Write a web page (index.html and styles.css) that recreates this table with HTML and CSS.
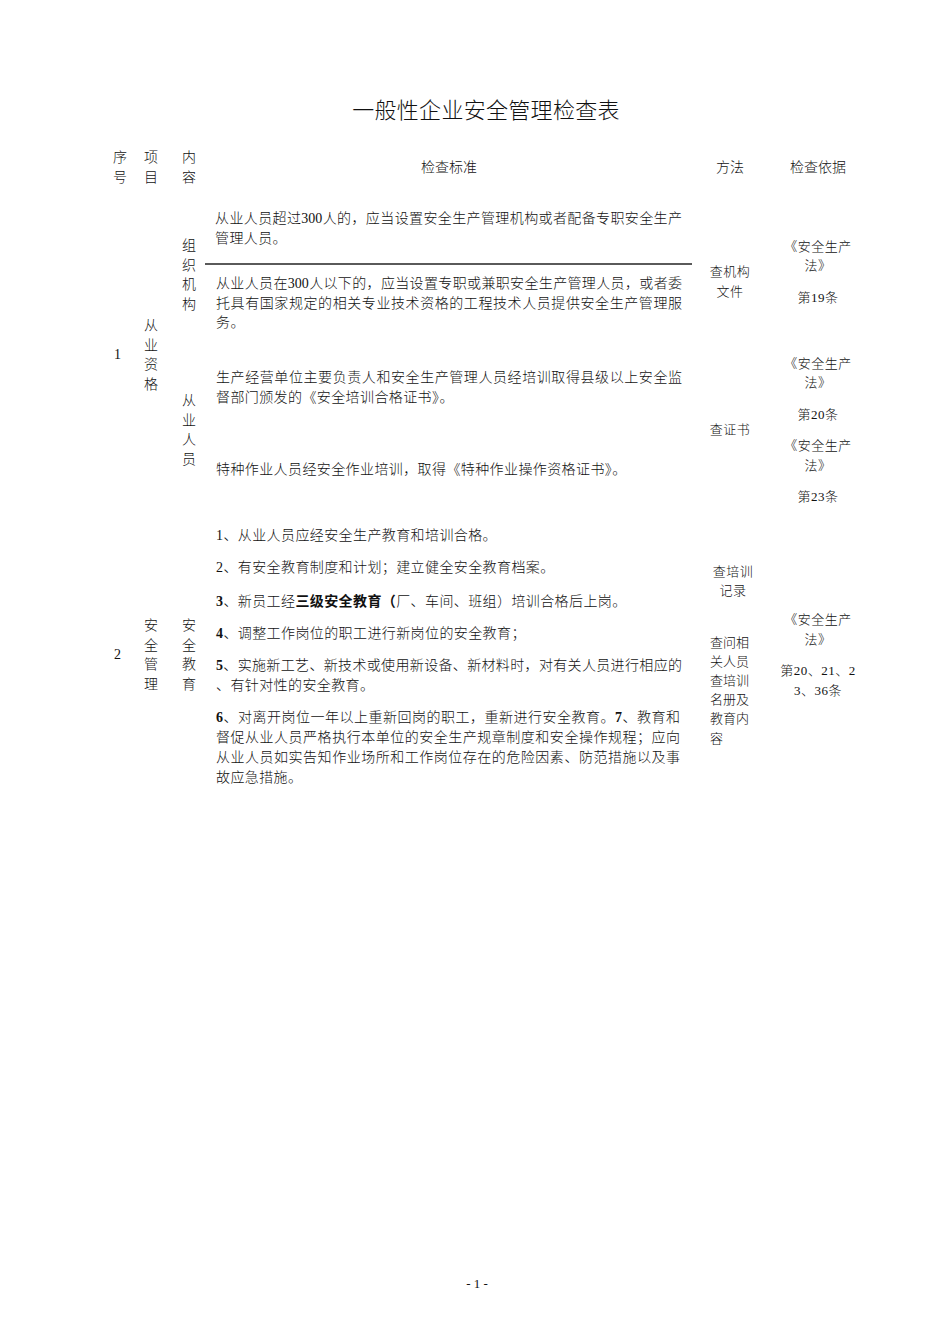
FILE: index.html
```html
<!DOCTYPE html>
<html lang="zh-CN">
<head>
<meta charset="utf-8">
<title>一般性企业安全管理检查表</title>
<link rel="stylesheet" href="styles.css">
</head>
<body>
<div class="page">
  <h1 class="title">一般性企业安全管理检查表</h1>

  <div class="sheet">
    <!-- header -->
    <div class="hd col-no narrow">序号</div>
    <div class="hd col-item narrow">项目</div>
    <div class="hd col-sub narrow">内容</div>
    <div class="hd col-std">检查标准</div>
    <div class="hd col-method">方法</div>
    <div class="hd col-basis">检查依据</div>

    <!-- section 1 -->
    <div class="col-no rows-1 num-cell">1</div>
    <div class="col-item rows-1 narrow">从业资格</div>
    <div class="col-sub rows-1a narrow">组织机构</div>
    <div class="col-sub rows-1b narrow">从业人员</div>

    <div class="col-std row-a std ruled">
      <span class="ln">从业人员超过300人的，应当设置安全生产管理机构或者配备专职安全生产</span>
      <span>管理人员。</span>
    </div>
    <div class="col-std row-b std pt-b">
      <span class="ln">从业人员在300人以下的，应当设置专职或兼职安全生产管理人员，或者委</span>
      <span class="ln">托具有国家规定的相关专业技术资格的工程技术人员提供安全生产管理服</span>
      <span>务。</span>
    </div>
    <div class="col-std row-c std pt-c">
      <span class="ln">生产经营单位主要负责人和安全生产管理人员经培训取得县级以上安全监</span>
      <span>督部门颁发的《安全培训合格证书》。</span>
    </div>
    <div class="col-std row-d std pt-d">
      <span>特种作业人员经安全作业培训，取得《特种作业操作资格证书》。</span>
    </div>

    <div class="col-method rows-1a small method-1a">查机构<br>文件</div>
    <div class="col-method rows-1b small">查证书</div>

    <div class="col-basis rows-1a small basis basis-1a">
      <p>《安全生产<br>法》</p>
      <p>第19条</p>
    </div>
    <div class="col-basis rows-1b small basis">
      <p>《安全生产<br>法》</p>
      <p>第20条</p>
      <p>《安全生产<br>法》</p>
      <p>第23条</p>
    </div>

    <!-- section 2 -->
    <div class="col-no row-2 num-cell">2</div>
    <div class="col-item row-2 narrow">安全管理</div>
    <div class="col-sub row-2 narrow">安全教育</div>

    <div class="col-std row-2 std std-2">
      <p>1、从业人员应经安全生产教育和培训合格。</p>
      <p>2、有安全教育制度和计划；建立健全安全教育档案。</p>
      <p><b>3</b>、新员工经<b class="hei">三级安全教育（</b>厂、车间、班组）培训合格后上岗。</p>
      <p><b>4</b>、调整工作岗位的职工进行新岗位的安全教育；</p>
      <p><span class="ln"><b>5</b>、实施新工艺、新技术或使用新设备、新材料时，对有关人员进行相应的</span><span>、有针对性的安全教育。</span></p>
      <p class="narrower"><span class="ln"><b>6</b>、对离开岗位一年以上重新回岗的职工，重新进行安全教育。<b>7</b>、教育和</span><span class="ln">督促从业人员严格执行本单位的安全生产规章制度和安全操作规程；应向</span><span class="ln">从业人员如实告知作业场所和工作岗位存在的危险因素、防范措施以及事</span><span>故应急措施。</span></p>
    </div>

    <div class="col-method row-2 small method-2">
      <p class="m-rec">查培训记录</p>
      <p class="m-ask">查问相关人员查培训名册及教育内容</p>
    </div>

    <div class="col-basis row-2 small basis">
      <p>《安全生产<br>法》</p>
      <p>第20、21、2<br>3、36条</p>
    </div>
  </div>

  <footer class="pageno">- 1 -</footer>
</div>
</body>
</html>
```

FILE: styles.css
```css
* {
  box-sizing: border-box;
  margin: 0;
  padding: 0;
}

body {
  margin: 0;
  background: #ffffff;
  color: #111111;
  font-family: "Liberation Serif", "Noto Sans CJK SC", serif;
  font-size: 14px;
  font-weight: 300;
}

.page {
  width: 950px;
  min-height: 1344px;
  display: flex;
  flex-direction: column;
  padding-top: 96px;
}

.title {
  font-weight: 300;
  font-size: 22px;
  line-height: 30px;
  text-align: center;
  width: 760px;
  margin-left: 106px;
  letter-spacing: 0.3px;
}

.sheet {
  margin: 19px 0 0 108px;
  width: 760px;
  display: grid;
  grid-template-columns: 26px 34px 38px 486px 76px 100px;
  grid-template-rows: 45px 10px 65px 85px 70px 90px 290px;
}

/* columns */
.col-no { grid-column: 1; }
.col-item { grid-column: 2; }
.col-sub { grid-column: 3; }
.col-std { grid-column: 4; }
.col-method { grid-column: 5; }
.col-basis { grid-column: 6; }

/* rows */
.hd { grid-row: 1; align-self: center; text-align: center; line-height: 19px; }
.rows-1 { grid-row: 3 / 7; align-self: center; }
.rows-1a { grid-row: 3 / 5; align-self: center; }
.rows-1b { grid-row: 5 / 7; align-self: center; }
.row-a { grid-row: 3; }
.row-b { grid-row: 4; }
.row-c { grid-row: 5; }
.row-d { grid-row: 6; }
.row-2 { grid-row: 7; align-self: center; }

/* one-character-wide stacked labels */
.narrow {
  width: 14px;
  justify-self: center;
  word-break: break-all;
  line-height: 19.5px;
}

.col-no.narrow,
.num-cell {
  justify-self: start;
  margin-left: 5px;
}

.col-sub.narrow {
  margin-left: 0;
  position: relative;
  left: 2px;
}

.hd.col-std,
.hd.col-method,
.hd.col-basis {
  justify-self: center;
}

.num-cell {
  line-height: 20px;
  margin-left: 6px;
}

/* standards column */
.std {
  padding: 0 10px;
  line-height: 19.5px;
  letter-spacing: 0.4px;
}

.std span {
  display: block;
}

.ln {
  text-align: justify;
  text-align-last: justify;
  letter-spacing: 0;
}

.row-a.std {
  padding-top: 9px;
  line-height: 20px;
}

.ruled {
  border-bottom: 2px solid #5a5a5a;
  margin-left: -1px;
}

.pt-b { padding-top: 9px; }
.pt-c { padding-top: 18px; }
.pt-d { padding-top: 40px; }

.std-2 {
  align-self: start;
  padding-top: 16px;
  line-height: 20px;
}

.std-2 p + p {
  margin-top: 12px;
}

.std-2 .narrower {
  padding-right: 2px;
}

.std b {
  font-weight: 700;
}

.hei {
  font-family: "Noto Sans CJK SC", sans-serif;
  font-weight: 700;
}

/* method & basis */
.small {
  font-size: 13px;
  line-height: 19.5px;
  text-align: center;
  letter-spacing: 0.5px;
}

.method-1a {
  padding-top: 14px;
  line-height: 20px;
}

.basis p + p {
  margin-top: 12px;
}

.basis-1a {
  padding-bottom: 6px;
}

.method-2 {
  line-height: 19.2px;
  text-align: left;
  justify-self: start;
  padding-left: 18px;
  letter-spacing: 0;
}

.m-rec {
  width: 42px;
  text-align: center;
  margin-left: 2px;
  word-break: break-all;
  letter-spacing: 0.5px;
}

.m-ask {
  width: 40px;
  margin-top: 32px;
  word-break: break-all;
}

.pageno {
  margin-top: auto;
  padding-bottom: 50px;
  text-align: center;
  font-size: 13px;
  line-height: 20px;
  padding-left: 4px;
}
```
